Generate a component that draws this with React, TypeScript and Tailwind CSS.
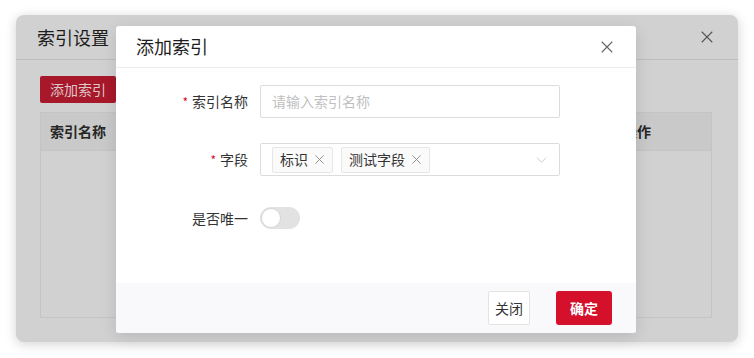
import * as React from 'react';

const font = { fontFamily: '"Noto Sans CJK SC", "Noto Sans", sans-serif' };

function CloseIcon({ className }: { className?: string }) {
  return (
    <svg viewBox="0 0 16 16" className={className} fill="none" stroke="currentColor" strokeWidth="1.3">
      <path d="M2 2L14 14M14 2L2 14" />
    </svg>
  );
}

function Tag({ label }: { label: string }) {
  return (
    <span className="flex h-[26px] items-center gap-[6px] rounded-[2px] border border-[#e6e6e6] bg-[#fafafa] pl-[7px] pr-[7px] text-[14px] text-[#333]">
      {label}
      <CloseIcon className="h-[11px] w-[11px] text-[#888]" />
    </span>
  );
}

function Label({ text, required }: { text: string; required?: boolean }) {
  return (
    <div className="flex w-[144px] shrink-0 items-center justify-end pr-[12px] text-[14px] text-[#333]">
      {required && <span className="mr-[4px] text-[12px] text-[#d4102b]">*</span>}
      {text}
    </div>
  );
}

export default function App() {
  return (
    <div className="relative h-[358px] w-[754px] overflow-hidden bg-white" style={font}>
      {/* masked background dialog */}
      <div className="ml-[16px] mt-[15px] flex h-[327px] w-[722px] flex-col rounded-[8px] bg-[#d1d1d1] shadow-[0_2px_12px_rgba(0,0,0,0.18)]">
        <div className="flex h-[45px] shrink-0 items-center justify-between border-b border-[#bdbdbd] pl-[21px] pr-[24px]">
          <span className="text-[18px] text-[#1c1c1c]">索引设置</span>
          <CloseIcon className="h-[14px] w-[14px] text-[#555]" />
        </div>
        <div className="flex flex-1 flex-col pb-[24px] pl-[24px] pr-[26px] pt-[16px]">
          <div className="flex h-[27px] w-[76px] items-center justify-center rounded-[2px] bg-[#a8182b] text-[14px] text-[#dcc8ca]">
            添加索引
          </div>
          <div className="mt-[9px] flex flex-1 flex-col border border-[#c4c4c4]">
            <div className="flex h-[38px] items-center justify-between border-b border-[#c4c4c4] bg-[#c9c9c9] pl-[9px] pr-[60px] text-[14px] font-bold text-[#262626]">
              <span>索引名称</span>
              <span>操作</span>
            </div>
          </div>
        </div>
      </div>

      {/* foreground modal */}
      <div className="absolute left-[116px] top-[26px] flex h-[307px] w-[520px] flex-col overflow-hidden rounded-[3px] bg-white shadow-[0_4px_16px_rgba(0,0,0,0.12)]">
        <div className="flex h-[42px] shrink-0 items-center justify-between border-b border-[#ebebeb] pl-[20px] pr-[22px]">
          <span className="text-[18px] text-[#1d1d1d]">添加索引</span>
          <CloseIcon className="h-[14px] w-[14px] text-[#666]" />
        </div>
        <div className="flex flex-1 flex-col pt-[17px]">
          <div className="flex h-[33px] items-stretch">
            <Label text="索引名称" required />
            <div className="flex w-[300px] items-center rounded-[2px] border border-[#dcdcdc] px-[11px] text-[14px] text-[#bfbfbf]">
              请输入索引名称
            </div>
          </div>
          <div className="mt-[25px] flex h-[33px] items-stretch">
            <Label text="字段" required />
            <div className="flex w-[300px] items-center gap-[8px] rounded-[2px] border border-[#dcdcdc] pl-[11px] pr-[12px]">
              <Tag label="标识" />
              <Tag label="测试字段" />
              <svg viewBox="0 0 12 12" className="ml-auto h-[11px] w-[11px] text-[#c8c8c8]" fill="none" stroke="currentColor" strokeWidth="1">
                <path d="M1 4L6 9L11 4" />
              </svg>
            </div>
          </div>
          <div className="mt-[31px] flex h-[22px] items-stretch">
            <Label text="是否唯一" />
            <div className="relative h-[22px] w-[40px] rounded-full bg-[#e2e2e2]">
              <div className="absolute left-[1px] top-[1px] h-[20px] w-[20px] rounded-full border border-[#d6d6d6] bg-white" />
            </div>
          </div>
        </div>
        <div className="flex h-[50px] shrink-0 items-center justify-end gap-[26px] bg-[#f9f9fb] pr-[24px]">
          <div className="flex h-[34px] w-[42px] items-center justify-center rounded-[2px] border border-[#e3e3e3] bg-white text-[14px] text-[#333]">
            关闭
          </div>
          <div className="flex h-[34px] w-[56px] items-center justify-center rounded-[3px] bg-[#d4102b] text-[14px] font-bold text-white">
            确定
          </div>
        </div>
      </div>
    </div>
  );
}
